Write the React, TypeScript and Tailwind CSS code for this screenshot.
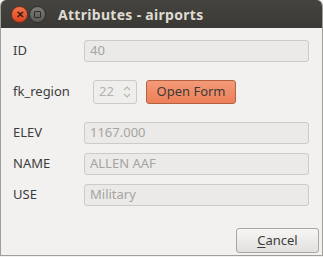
import React from "react";

const font = { fontFamily: '"Noto Sans", "Open Sans", sans-serif' };

function Field({ label, value }: { label: string; value: string }) {
  return (
    <div className="flex items-center h-[22px]">
      <span className="w-[71px] pl-[12px] text-[13px] text-[#3c3c3c] box-content">{label}</span>
      <div className="w-[225px] h-[22px] rounded-[3px] border border-[#cdcbc8] bg-[#ebeae8] px-[5px] flex items-center text-[13px] text-[#a5a4a1]">
        {value}
      </div>
    </div>
  );
}

export default function App() {
  return (
    <div className="w-[323px] h-[257px] bg-[#f2f1f0] overflow-hidden" style={font}>
      <div className="flex flex-col w-full h-[256px] border-x border-b border-[#a09f9b] rounded-t-[6px] overflow-hidden">
        {/* title bar */}
        <div className="h-[28px] shrink-0 bg-gradient-to-b from-[#45443f] to-[#3a3935] flex items-center pl-[11px] -mx-px">
          <div className="w-[17px] h-[17px] rounded-full bg-gradient-to-b from-[#f3754b] to-[#d9441d] border border-[#7a2e17] flex items-center justify-center text-[#3b1a0c] text-[10px] font-bold leading-none">
            ✕
          </div>
          <div className="ml-[1px] w-[17px] h-[17px] rounded-full bg-gradient-to-b from-[#7c7b76] to-[#5b5a56] border border-[#2e2d2a] flex items-center justify-center">
            <div className="w-[7px] h-[7px] border border-[#2c2b28] rounded-[1px]" />
          </div>
          <span className="ml-[12px] text-[14px] font-bold text-[#dfdbd2] tracking-[0.3px]">Attributes - airports</span>
        </div>

        <div className="flex flex-col pt-[12px]">
          <Field label="ID" value="40" />

          <div className="flex items-center mt-[18px] h-[24px]">
            <span className="w-[80px] pl-[12px] text-[13px] text-[#3c3c3c] box-content">fk_region</span>
            <div className="w-[44px] h-[24px] rounded-[3px] border border-[#cdcbc8] bg-[#efeeec] flex items-center pl-[5px] text-[13px] text-[#b3b2af]">
              <span className="flex-1">22</span>
              <svg width="8" height="14" viewBox="0 0 8 14" className="mr-[5px]">
                <path d="M1 5 L4 2 L7 5" fill="none" stroke="#b8b7b4" strokeWidth="1.2" />
                <path d="M1 9 L4 12 L7 9" fill="none" stroke="#b8b7b4" strokeWidth="1.2" />
              </svg>
            </div>
            <button className="ml-[9px] w-[90px] h-[24px] rounded-[3px] border border-[#b4613f] bg-gradient-to-b from-[#f49a78] to-[#ec7f58] text-[13px] text-[#3c3b37]">
              Open Form
            </button>
          </div>

          <div className="flex flex-col gap-[9px] mt-[18px]">
            <Field label="ELEV" value="1167.000" />
            <Field label="NAME" value="ALLEN AAF" />
            <Field label="USE" value="Military" />
          </div>
        </div>

        <div className="flex-1" />
        <div className="flex justify-end pr-[3px] pb-[2px]">
          <button className="w-[83px] h-[25px] rounded-[3px] border border-[#a9a7a3] bg-gradient-to-b from-[#f7f6f5] to-[#e2e0dd] text-[13px] text-[#3c3c3c]">
            <span className="underline underline-offset-2">C</span>ancel
          </button>
        </div>
      </div>
    </div>
  );
}
